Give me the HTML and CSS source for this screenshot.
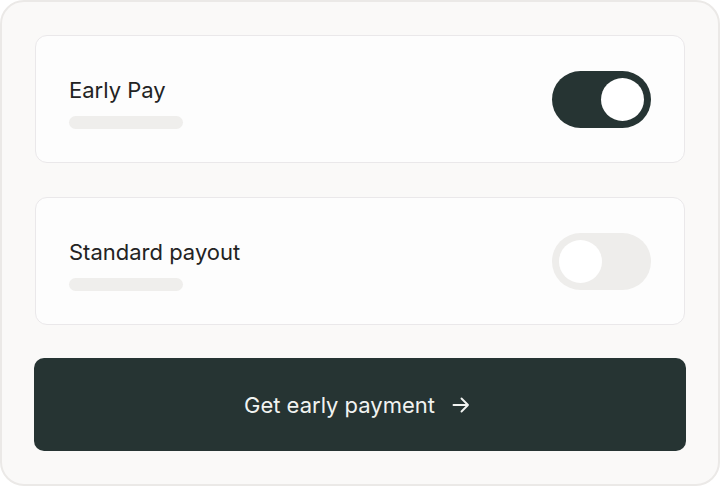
FILE: index.html
```html
<!DOCTYPE html>
<html>
<head>
<meta charset="utf-8">
<link rel="stylesheet" href="styles.css">
</head>
<body>
<div class="panel">
  <div class="card">
    <div class="info">
      <div class="title">Early Pay</div>
      <div class="skeleton"></div>
    </div>
    <div class="toggle on"><span class="knob"></span></div>
  </div>
  <div class="card">
    <div class="info">
      <div class="title">Standard payout</div>
      <div class="skeleton"></div>
    </div>
    <div class="toggle off"><span class="knob"></span></div>
  </div>
  <button class="cta">
    <span>Get early payment</span>
    <svg class="arrow" width="18" height="18" viewBox="0 0 18 18" fill="none" stroke="currentColor" stroke-width="1.9" stroke-linecap="round" stroke-linejoin="round"><path d="M1.5 9h14.5M9.5 2.5 16 9l-6.5 6.5"/></svg>
  </button>
</div>
</body>
</html>
```
FILE: styles.css
```css
html, body { margin: 0; padding: 0; background: #ffffff; }
body { font-family: Inter, "Noto Sans", sans-serif; }
.panel {
  width: 720px; height: 486px; box-sizing: border-box;
  border: 2px solid #ebe9e7; border-radius: 24px;
  background: #faf9f8;
  padding: 33px;
  display: flex; flex-direction: column; gap: 33px;
}
.card {
  height: 128px; box-sizing: border-box; flex: none;
  border: 1px solid #eae8ea; border-radius: 12px;
  background: #fdfdfd;
  padding: 0 33px;
  display: flex; align-items: center; justify-content: space-between;
}
.card + .card { margin-top: 1px; }
.info { display: flex; flex-direction: column; gap: 13px; margin-top: 8px; }
.title { font-size: 22px; line-height: 26px; color: #232323; }
.skeleton { width: 114px; height: 13px; border-radius: 7px; background: #efeeec; }
.toggle {
  width: 99px; height: 57px; box-sizing: border-box; border-radius: 29px;
  padding: 7px; display: flex; align-items: center;
}
.toggle.on { background: #263433; justify-content: flex-end; }
.toggle.off { background: #eeedeb; justify-content: flex-start; }
.knob { width: 43px; height: 43px; border-radius: 50%; background: #ffffff; display: block; }
.cta {
  height: 93px; flex: none; border: none; border-radius: 10px;
  background: #263433; color: #f1f3f1;
  font-family: Inter, "Noto Sans", sans-serif; font-size: 22px;
  display: flex; align-items: center; justify-content: center; gap: 17px;
  padding: 0 6px 0 0; margin: 0 -1px;
}
.arrow { display: block; }
```
